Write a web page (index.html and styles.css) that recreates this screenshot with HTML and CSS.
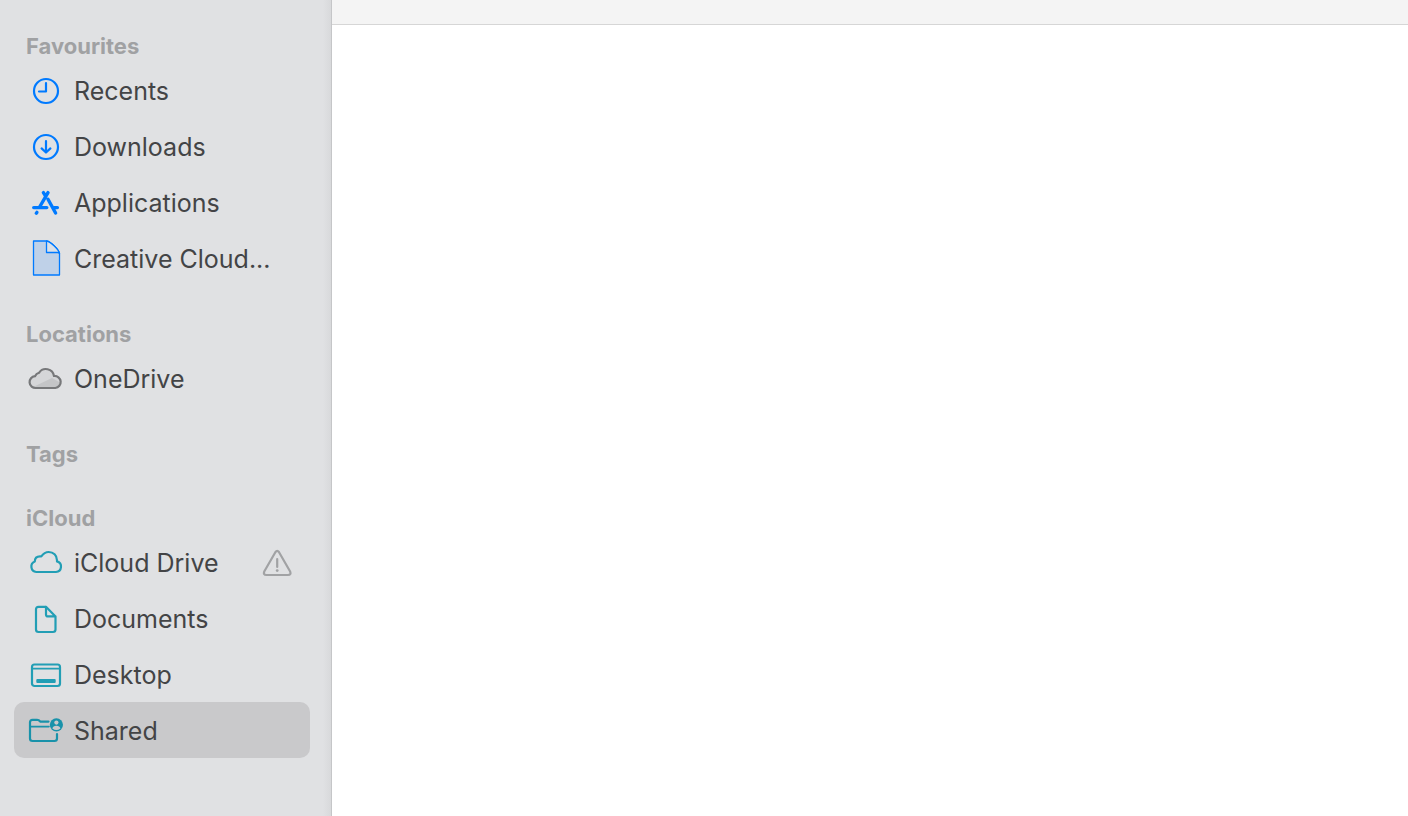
FILE: index.html
```
<!DOCTYPE html>
<html lang="en-GB">
<head>
<meta charset="utf-8">
<title>Finder</title>
<link rel="stylesheet" href="styles.css">
</head>
<body>
<div class="window">
  <nav class="sidebar" aria-label="Sidebar">
    <section class="group">
      <h2 class="group-title">Favourites</h2>
      <a class="item blue" href="#recents">
        <svg class="icon" viewBox="0 0 36 40" aria-hidden="true"><circle cx="18" cy="21" r="12"/><path d="M18 13V21.5H11"/></svg>
        <span class="label">Recents</span>
      </a>
      <a class="item blue" href="#downloads">
        <svg class="icon" viewBox="0 0 36 40" aria-hidden="true"><circle cx="18" cy="21" r="12"/><path d="M18 15.2V26.2M13.6 22.4L18 26.5L22.4 22.4"/></svg>
        <span class="label">Downloads</span>
      </a>
      <a class="item blue" href="#applications">
        <svg class="icon heavy" viewBox="0 0 36 40" aria-hidden="true"><path d="M15.4 10.6L17.3 13.6M20 10.6L11.6 25M5.7 25.6H18.8M20 17.2L27.6 31M26.2 25.6H29.4M8.9 30.4L8.3 31.2"/></svg>
        <span class="label">Applications</span>
      </a>
      <a class="item blue" href="#creative-cloud">
        <svg class="icon fine" viewBox="0 0 36 40" aria-hidden="true"><path class="paper" d="M5.5 3H18.5C23 4 30.5 11 31.5 15.5V37H5.5Z"/><path class="fold" d="M18.5 3V14.5H29.5Q31 14.6 31.5 15.5C30.5 11 23 4 18.5 3Z"/></svg>
        <span class="label">Creative Cloud...</span>
      </a>
    </section>
    <section class="group">
      <h2 class="group-title">Locations</h2>
      <a class="item grey" href="#onedrive">
        <svg class="icon" viewBox="0 0 36 40" aria-hidden="true"><path class="cloud-fill" d="M8 30A5.8 5.8 0 0 1 7 18.2A6 6 0 0 1 11 14.8A8.2 8.2 0 0 1 26 18A6 6 0 0 1 27.3 30Z"/><path class="cloud-shade" d="M5 29L24 20L33 25Q32 30 27.5 30H8Z"/><path d="M8 30A5.8 5.8 0 0 1 7 18.2A6 6 0 0 1 11 14.8A8.2 8.2 0 0 1 26 18A6 6 0 0 1 27.3 30Z"/></svg>
        <span class="label">OneDrive</span>
      </a>
    </section>
    <section class="group">
      <h2 class="group-title">Tags</h2>
    </section>
    <section class="group">
      <h2 class="group-title">iCloud</h2>
      <a class="item teal" href="#icloud-drive">
        <svg class="icon" viewBox="0 0 36 40" aria-hidden="true"><path d="M8.3 30A5.4 5.4 0 0 1 6.8 19.6Q6.9 14.3 12 14.3L13.3 14.4C15.3 11.6 17.8 10 20.7 10C25.4 10 29 13.5 29 18.2V19.4A5.4 5.4 0 0 1 28 30Z"/></svg>
        <span class="label">iCloud Drive</span>
        <svg class="warning" viewBox="0 0 30 40" role="img" aria-label="Sync problem"><path d="M13.5 10Q15.2 7.7 16.9 10L28 29.3Q29.6 33 26 33H4.4Q.8 33 2.4 29.3Z"/><path d="M15.2 17V25"/><circle class="dot" cx="15.2" cy="28.6" r="1.4"/></svg>
      </a>
      <a class="item teal" href="#documents">
        <svg class="icon" viewBox="0 0 36 40" aria-hidden="true"><path d="M17.6 8.8H10.5Q8 8.8 8 11.3V31.5Q8 34 10.5 34H25Q27.5 34 27.5 31.5V18.4L18 8.8V16.4Q18 18.4 20 18.4H27.5"/></svg>
        <span class="label">Documents</span>
      </a>
      <a class="item teal" href="#desktop">
        <svg class="icon" viewBox="0 0 36 40" aria-hidden="true"><rect x="4" y="10.5" width="28" height="21.5" rx="2.5"/><path class="thin" d="M4 14.6H32"/><rect class="solid" x="8.3" y="25" width="19.4" height="4" rx="1"/></svg>
        <span class="label">Desktop</span>
      </a>
      <a class="item teal selected" href="#shared" aria-current="page">
        <svg class="icon" viewBox="0 0 36 40" aria-hidden="true"><path d="M20.5 11.6H12.4L10.6 10.2Q10 9.8 9 9.8H4.5Q2 9.8 2 12.3V28.5Q2 31 4.5 31H26.5Q29 31 29 28.5V24"/><path class="thin" d="M2 16.6H21"/><circle class="solid" cx="28.4" cy="14.8" r="6.6"/><circle class="person" cx="28.4" cy="12.6" r="2.1"/><path class="person" d="M24.4 18.4Q25 15.7 28.4 15.7T32.4 18.4Q28.4 21.6 24.4 18.4Z"/></svg>
        <span class="label">Shared</span>
      </a>
    </section>
  </nav>
  <main class="content">
    <header class="toolbar"></header>
  </main>
</div>
</body>
</html>
```
FILE: styles.css
```
* {
  box-sizing: border-box;
}

body {
  margin: 0;
  background: #fff;
  font-family: Inter, "Liberation Sans", sans-serif;
}

.window {
  display: flex;
  min-height: 100vh;
}

.sidebar {
  display: flex;
  flex-direction: column;
  flex: none;
  gap: 30px;
  width: 332px;
  padding: 28px 21px 28px 14px;
  border-right: 1px solid #c5c6c8;
  background: linear-gradient(to left, #d8d9db, #e0e1e3 8px);
}

.group-title {
  margin: 0;
  padding: 2px 0 0 12px;
  color: #a0a1a3;
  font-size: 22px;
  font-weight: 700;
  line-height: 32px;
}

.item {
  display: flex;
  align-items: center;
  gap: 10px;
  height: 56px;
  padding: 0 18px 0 14px;
  border-radius: 10px;
  color: #434446;
  text-decoration: none;
}

.selected {
  background: #c9c9cb;
}

.label {
  padding-top: 2px;
  font-size: 25px;
  line-height: 32px;
  white-space: nowrap;
}

.icon,
.warning {
  flex: none;
  width: 36px;
  height: 40px;
  fill: none;
  stroke: currentColor;
  stroke-width: 2.2;
  stroke-linecap: round;
  stroke-linejoin: round;
}

.warning {
  width: 30px;
  margin-left: auto;
  color: #a1a2a4;
}

.blue .icon {
  color: #007aff;
}

.teal .icon {
  color: #229eb5;
}

.selected .icon {
  color: #1992aa;
}

.grey .icon {
  color: #77787a;
}

.icon.heavy {
  stroke-width: 3.4;
}

.icon.fine {
  stroke-width: 1.3;
}

.paper {
  fill: #bfd1e8;
}

.fold {
  fill: #dce1e8;
}

.cloud-fill {
  fill: #d5d6d8;
  stroke: none;
}

.cloud-shade {
  fill: #c4c5c7;
  stroke: none;
}

.thin {
  stroke-width: 1.6;
}

.solid,
.dot {
  fill: currentColor;
  stroke: none;
}

.person {
  fill: #c9c9cb;
  stroke: none;
}

.content {
  flex: 1;
  min-width: 0;
}

.toolbar {
  height: 25px;
  border-bottom: 1px solid #d6d6d6;
  background: #f4f4f4;
}
```
